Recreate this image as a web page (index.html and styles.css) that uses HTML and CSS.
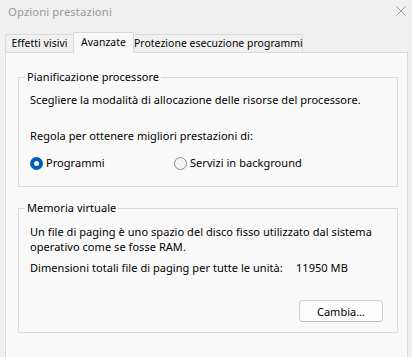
FILE: index.html
```html
<!DOCTYPE html>
<html>

<head>
    <title>Opzioni prestazioni</title>
    <link rel="stylesheet" href="styles.css">
</head>

<body>

    <div class="titlebar">
        <span class="title">Opzioni prestazioni</span>
        <svg class="close" width="10" height="10" viewBox="0 0 10 10">
            <path d="M0.5 0.5 L9.5 9.5 M9.5 0.5 L0.5 9.5" stroke="#9a9a9a" stroke-width="1" fill="none"/>
        </svg>
    </div>

    <div class="tabs">
        <div class="tab tab-effects">Effetti visivi</div>
        <div class="tab tab-advanced active">Avanzate</div>
        <div class="tab tab-dep">Protezione esecuzione programmi</div>
    </div>

    <div class="panel">
        <fieldset class="group group-cpu">
            <legend>Pianificazione processore</legend>
            <p class="line first">Scegliere la modalità di allocazione delle risorse del processore.</p>
            <p class="line gap">Regola per ottenere migliori prestazioni di:</p>
            <div class="radios">
                <label class="radio"><span class="dot checked"></span>Programmi</label>
                <label class="radio"><span class="dot"></span>Servizi in background</label>
            </div>
        </fieldset>

        <fieldset class="group group-mem">
            <legend>Memoria virtuale</legend>
            <p class="para">Un file di paging è uno spazio del disco fisso utilizzato dal sistema<br>operativo come se fosse RAM.</p>
            <div class="total">
                <span>Dimensioni totali file di paging per tutte le unità:</span>
                <span>11950 MB</span>
            </div>
            <div class="actions">
                <button class="btn">Cambia...</button>
            </div>
        </fieldset>
    </div>

</body>

</html>
```

FILE: styles.css
```css
body {
    margin: 0;
    background: #f0f0f0;
    font-family: "Noto Sans", "Open Sans", sans-serif;
    font-size: 11px;
    letter-spacing: 0.05px;
    line-height: 16px;
    color: #000;
    overflow: hidden;
}

.titlebar {
    display: flex;
    justify-content: space-between;
    align-items: flex-start;
    height: 32px;
    padding: 4px 6px 0 8px;
    box-sizing: border-box;
}

.title {
    color: #9a9a9a;
    font-size: 11.4px;
}

.close {
    margin-top: 2px;
}

.tabs {
    display: flex;
    align-items: flex-end;
    height: 20px;
    margin-left: 5px;
}

.tab {
    height: 18px;
    line-height: 17px;
    font-size: 10.4px;
    text-align: center;
    white-space: nowrap;
    border: 1px solid #dadada;
    border-bottom: none;
    border-right: none;
    box-sizing: border-box;
    background: #f0f0f0;
}

.tab-effects {
    width: 68px;
}

.tab-advanced {
    width: 61px;
}

.tab-dep {
    width: 169px;
    border-right: 1px solid #dadada;
}

.tab.active {
    height: 21px;
    line-height: 18px;
    margin-bottom: -1px;
    background: #f9f9f9;
    border-right: 1px solid #dadada;
    position: relative;
    z-index: 1;
}

.tab.active + .tab {
    border-left: none;
}

.panel {
    margin-left: 5px;
    width: 403px;
    height: 320px;
    box-sizing: border-box;
    background: #f9f9f9;
    border: 1px solid #dadada;
    padding: 16px 9px 0 12px;
}

.group {
    margin: 0;
    padding: 0 11px;
    min-width: 0;
    border: 1px solid #dcdcdc;
}

.group legend {
    margin-left: -5px;
    padding: 0 2px;
    line-height: 16px;
}

.group-cpu {
    padding-bottom: 15px;
}

.group-mem {
    margin-top: 13px;
    padding-bottom: 10px;
}

.line {
    margin: 0;
    white-space: nowrap;
}

.line.first {
    margin-top: 7px;
}

.line.gap {
    margin-top: 20px;
}

.radios {
    display: grid;
    grid-template-columns: 144px auto;
    margin-top: 11px;
}

.radio {
    display: flex;
    align-items: center;
    gap: 3px;
    height: 16px;
}

.dot {
    width: 13px;
    height: 13px;
    box-sizing: border-box;
    border-radius: 50%;
    border: 1px solid #8a8a8a;
    background: #f5f5f5;
}

.dot.checked {
    border: 4px solid #005fb8;
    background: #fff;
}

.para {
    margin: 8px 0 0;
    line-height: 15px;
    white-space: nowrap;
}

.total {
    display: grid;
    grid-template-columns: 266px auto;
    margin-top: 6px;
    white-space: nowrap;
}

.actions {
    display: flex;
    justify-content: flex-end;
    margin-top: 24px;
    padding-right: 3px;
}

.btn {
    width: 84px;
    height: 22px;
    font-family: inherit;
    font-size: 11px;
    background: #fdfdfd;
    border: 1px solid #d0d0d0;
    border-bottom-color: #bcbcbc;
    border-radius: 4px;
    color: #000;
    padding: 0;
}
```
